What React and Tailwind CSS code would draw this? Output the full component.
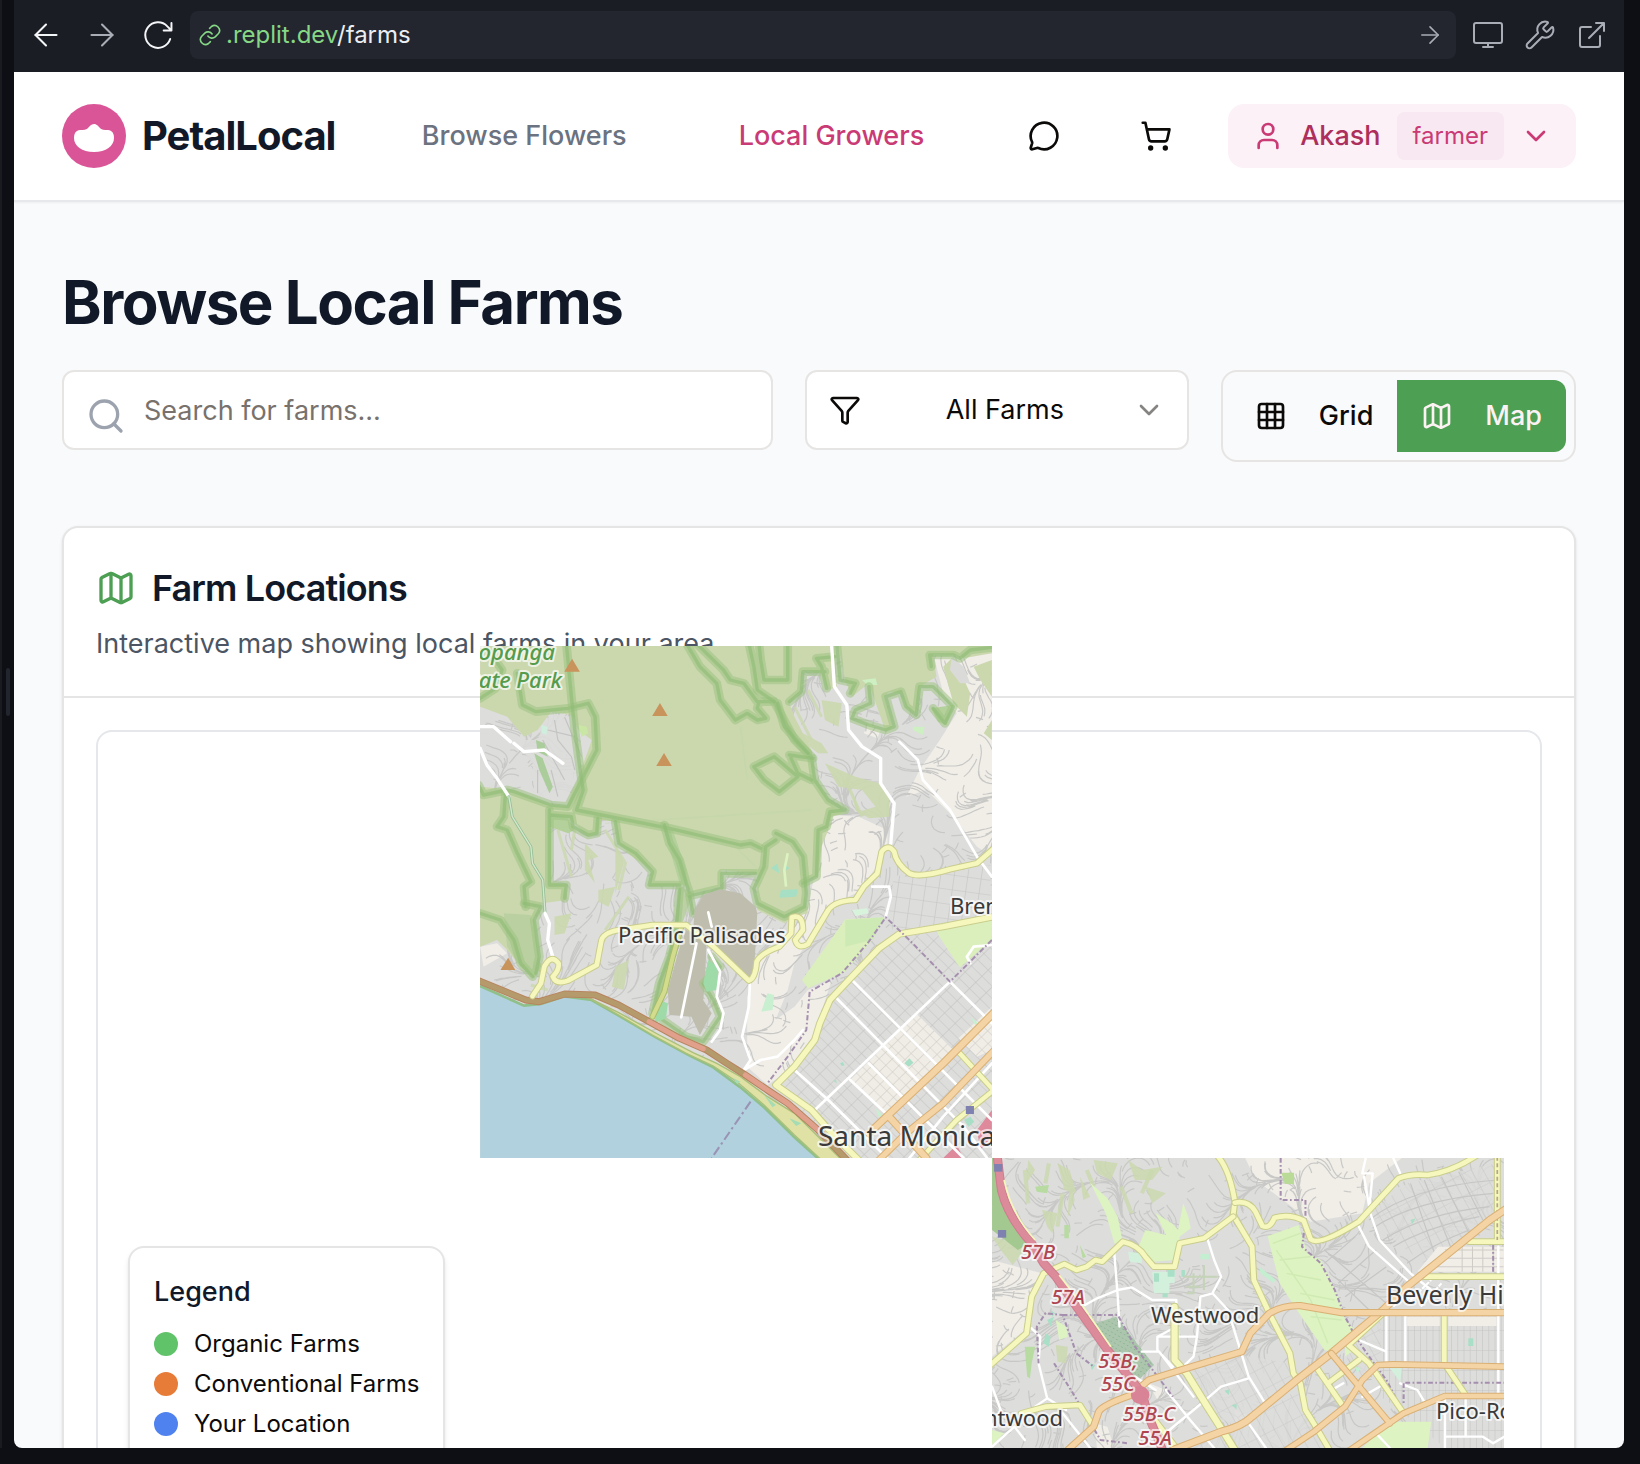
import React from "react";
import {
  ArrowLeft,
  ArrowRight,
  ChevronDown,
  Filter,
  Grid3x3,
  Map as MapIcon,
  MessageCircle,
  Search,
  ShoppingCart,
  User,
  Wrench,
} from "lucide-react";

/* ---------- street texture ---------- */

function makeRandom(seed) {
  let s = seed;
  return () => {
    s = (s * 16807) % 2147483647;
    return s / 2147483647;
  };
}

// Winding lanes that follow a smooth hillside field, with short cross links.
function lanes(seed, x0, y0, x1, y1, count) {
  const rnd = makeRandom(seed);
  const heading = (x, y) =>
    1.3 +
    1.5 * Math.sin(x / 83 + seed) +
    1.2 * Math.cos(y / 67) +
    0.8 * Math.sin((x + y) / 41);
  let d = "";
  for (let i = 0; i < count; i++) {
    let x = x0 + rnd() * (x1 - x0);
    let y = y0 + rnd() * (y1 - y0);
    const cross = rnd() < 0.25;
    const steps = cross ? 2 : 6 + Math.floor(rnd() * 6);
    d += `M${x.toFixed(0)} ${y.toFixed(0)}`;
    for (let k = 0; k < steps; k++) {
      const a = heading(x, y) + (cross ? Math.PI / 2 : 0);
      x += Math.cos(a) * 11;
      y += Math.sin(a) * 11;
      d += `L${x.toFixed(0)} ${y.toFixed(0)}`;
    }
  }
  return d;
}

const WEST_LANES = lanes(11, 30, 48, 1544, 1584, 1500);
const EAST_LANES = lanes(77, 35, 24, 1522, 894, 1000);

function Road({ d, w = 16, color = "#f5f7bd", casing = "#c9cd8c" }) {
  return (
    <g fill="none" strokeLinecap="round" strokeLinejoin="round">
      <path d={d} stroke={casing} strokeWidth={w + 6} />
      <path d={d} stroke={color} strokeWidth={w} />
    </g>
  );
}

function ParkEdge({ d }) {
  return (
    <g fill="none" strokeLinejoin="round" strokeLinecap="round">
      <path d={d} stroke="#9cc281" strokeOpacity="0.55" strokeWidth="26" />
      <path d={d} stroke="#8dbb75" strokeOpacity="0.6" strokeWidth="10" />
    </g>
  );
}

function Lines({ d, color = "#ffffff", w = 8, dash }) {
  return (
    <path
      d={d}
      fill="none"
      stroke={color}
      strokeWidth={w}
      strokeDasharray={dash}
      strokeLinejoin="round"
      strokeLinecap={dash ? "butt" : "round"}
    />
  );
}

function Label({ x, y, size = 22, anchor = "start", color = "#3a3a3a", italic, weight = 400, children }) {
  return (
    <text
      x={x}
      y={y}
      fontSize={size}
      textAnchor={anchor}
      fill={color}
      stroke="#ffffff"
      strokeOpacity="0.7"
      strokeWidth="4"
      strokeLinejoin="round"
      paintOrder="stroke"
      fontStyle={italic ? "italic" : "normal"}
      fontWeight={weight}
      fontFamily='"Noto Sans", sans-serif'
    >
      {children}
    </text>
  );
}

const ORANGE = { color: "#f4d3a4", casing: "#d9b074" };

function WestTile() {
  return (
    <svg viewBox="0 0 512 512" className="block size-full" role="img" aria-label="Map of Pacific Palisades and Santa Monica">
      <defs>
        <pattern id="city" width="44" height="26" patternUnits="userSpaceOnUse" patternTransform="rotate(45)">
          <rect width="44" height="26" fill="#dddddc" />
          <path d="M0 0H44M0 0V26" stroke="#c2c2c0" strokeWidth="3.5" />
        </pattern>
        <pattern id="cityLight" width="28" height="26" patternUnits="userSpaceOnUse" patternTransform="rotate(45)">
          <rect width="28" height="26" fill="#f0ede6" />
          <path d="M0 0H28M0 0V26" stroke="#cfccc6" strokeWidth="3.5" />
        </pattern>
        <pattern id="brentwood" width="40" height="44" patternUnits="userSpaceOnUse" patternTransform="rotate(8)">
          <rect width="40" height="44" fill="#dddddc" />
          <path d="M0 0H40M0 0V44" stroke="#c4c4c2" strokeWidth="3.5" />
        </pattern>
      </defs>
      <g transform="translate(-10 -16) scale(0.338 0.33333)">
        <rect x="0" y="0" width="1600" height="1600" fill="#dddddc" />
        <path fill="#f1eee8" d="M1370 70H1560V690L1500 650 1430 560 1350 480 1290 500 1330 420 1390 330 1440 250 1400 190ZM1070 555 1150 560 1235 600 1235 640 1210 700 1150 785 1080 820 1050 870 1000 930 960 1000 940 1080 900 1180 870 1230 820 1280 820 1100 860 980 930 930 1000 830 1010 780 1040 640ZM1000 1080 1070 1050 1010 1240 960 1310 880 1365 820 1310 860 1200 960 1130ZM1180 280 1215 300 1205 325 1165 310ZM30 950 80 940 110 970 40 1010Z" />
        <path d={WEST_LANES} fill="none" stroke="#c8c8c6" strokeWidth="3.5" strokeLinejoin="round" />
        <path fill="url(#brentwood)" d="M1255 735 1330 745 1540 705V860L1400 895 1250 900 1230 860 1245 800Z" />
        <path fill="#cbd8ae" opacity="0.9" d="M985 310 1040 340 1060 370 1030 370 980 330ZM1050 400 1140 440 1210 460 1240 500 1240 560 1180 565 1150 545 1200 530 1160 480 1090 470ZM380 780 430 770 410 830 380 815ZM250 860 300 850 280 910 250 915ZM430 1010 470 990 455 1080 420 1070ZM340 640 380 680 350 690 370 760 340 720ZM430 640 455 700 430 790ZM1040 210 1100 220 1090 290 1050 270ZM1130 480 1160 560 1140 540Z" />
        <g fill="none" stroke="#cbd8ae" strokeWidth="9" opacity="0.8">
          <path d="M960 230 1010 330M1000 180 1040 260M1110 450 1160 560M260 600 300 740M310 600 300 660M400 600 460 700 440 780M230 1080 180 1065M470 800 400 900" />
        </g>

        {/* parkland */}
        <path fill="#cbd8ae" d="M30 48H1080L1085 170 1060 180 1040 130 985 120 975 190 945 220 960 260 1010 360 1020 440 1060 510 1110 550 1070 560 1060 600 1040 650 1030 740 1000 745 990 800 1000 850 960 860 930 880 850 840 850 730 745 720 740 770 660 790 640 765 530 770 540 720 480 680 440 640 430 575 390 570 380 610 350 620 320 590 290 565 240 565V755L285 765V810L215 820 190 860 205 990 210 1010 190 1040 150 1010 110 960 80 930 30 950V470L130 480 240 525 285 530 320 440 350 360 360 330 320 300 300 255 240 245 200 300 160 320 110 260 30 230Z" />
        <path fill="#dddddc" d="M240 250 310 262 330 440 270 522 190 500 185 400 130 330 200 330 215 290Z" opacity="0.85" />
        <path d="M230 300 310 320M250 270 260 330 300 380 310 420M280 262 330 380M200 420V490M240 420 260 500M215 330 280 450" fill="none" stroke="#c4c4c2" strokeWidth="3.5" />
        <path fill="#9fc98c" opacity="0.8" d="M190 370 215 385 245 470 235 490 205 420ZM195 330 220 340 230 380 200 365Z" />
        <path fill="#c9e6a5" d="M320 285 345 290 350 310 330 320Z" />
        <path fill="#cfeedd" d="M212 285 230 290 226 315 212 310Z" />
        <path fill="#cbd8ae" d="M1090 48H1544V70L1460 85 1440 75 1370 72 1380 140 1330 170 1320 250 1290 230 1280 190 1240 185 1225 200 1250 290 1230 305 1180 160 1130 200 1110 150ZM1400 110 1430 80 1480 190 1470 260 1430 220ZM1490 110 1544 90V200L1510 150ZM1544 270V330L1520 310Z" />
        <path fill="#dadad8" d="M1425 80 1460 110 1480 160 1450 160 1420 120Z" />
        <path fill="#b5d19b" d="M1365 235 1430 225 1410 285 1385 275ZM570 590 600 600 640 720 640 770 620 760 600 690ZM235 550 290 565 310 600 290 610 235 590Z" />
        <path fill="#b9cfa0" opacity="0.9" d="M100 850 180 855 210 1010 190 1045 150 1010 110 950ZM620 770 660 790 600 960 575 1100 540 1160 560 1050 600 920Z" />
        <path fill="#cdefc2" d="M1310 290 1345 290 1340 315 1310 300ZM1160 150 1200 145 1205 165 1175 165Z" />
        <path fill="#a6dfc4" d="M890 715 910 700 915 730ZM920 780 970 778 965 800 915 803ZM930 700 945 715 925 725Z" />
        <path d="M940 670 930 720 935 770" fill="none" stroke="#dcf2c0" strokeWidth="8" />
        <path d="M790 655 850 715M400 580 1010 540M800 290 820 450" fill="none" stroke="#b8d8a0" strokeOpacity="0.3" strokeWidth="4" />

        <ParkEdge d="M30 205 75 175 95 120 60 70M140 130 155 225 195 245 290 235 350 220 370 260 375 360 330 450 290 530 240 525 130 485 110 480 40 495 25 465" />
        <ParkEdge d="M285 40 300 200 310 300 330 450 335 480 315 540 590 595 800 645 830 640 860 655" />
        <ParkEdge d="M640 40 680 110 730 160 740 210 785 270 820 250 850 270 875 265 850 235 855 215M670 40 750 120 770 150 810 160 850 215 900 215 940 290 960 330 1010 380 1020 450 1060 510 1110 540 1065 545 1055 590 1030 600 1025 740 985 760" />
        <ParkEdge d="M825 40 840 110 850 180 900 215M855 40 860 90 870 150H940V40M840 410 900 380 970 440 915 485 870 450ZM945 375 1015 385M950 385 970 430 1010 450M910 220 930 290 1000 370" />
        <ParkEdge d="M575 585 590 640 620 690 640 760 650 790M430 575 440 640 490 670 540 725 530 765 620 765M240 555 300 560 305 590 350 615 375 610 378 565M235 540V765H285L280 805" />
        <ParkEdge d="M105 490 100 560 80 590 110 600 140 670 180 755 160 770 165 830M905 610 955 635 985 680 995 790 990 830 930 860 850 820 840 775 870 710 875 650 905 630M845 730H745V775L660 795" />
        <ParkEdge d="M1085 40 1095 150 1140 160 1125 190M1180 170 1185 220 1140 240 1130 265 1180 285 1230 300 1255 290 1230 200 1275 185 1290 230 1320 255 1330 170 1370 170 1430 230 1405 280 1370 235M1080 80 1025 85 1040 110 1055 175M945 215 980 185 985 125 1050 125M1365 110 1360 75 1430 75 1450 85 1480 60 1544 52" />
        <ParkEdge d="M30 850 90 870 130 930 150 1000 185 1040M160 820 210 830 190 870 205 980 195 1030M620 780 610 900 590 980 560 1060 540 1150M650 800 660 850" />

        {/* bluffs */}
        <path fill="#bfbeae" d="M690 795 740 778 800 790 845 830 850 850 840 1035 820 1045 760 990 715 950 660 900 665 840ZM640 900 700 930 695 1060 690 1110 715 1150 680 1215 655 1160 590 1155 585 1080 615 970Z" />
        <ParkEdge d="M715 980 740 1010 690 1060 720 1110 740 1160 690 1235 640 1220 570 1170" />
        <path fill="#9edba8" d="M705 990 735 1010 730 1080 700 1085 690 1060ZM560 1110 585 1120 580 1165 545 1180Z" />
        <path fill="#c8efcf" d="M880 1090 900 1095 895 1140 862 1145Z" />

        {/* golf links */}
        <path fill="#dbefbd" d="M1110 868 1225 862 1190 930 1110 1025 1000 1075 982 1050 1060 940ZM1380 895 1544 858V930L1450 1012 1390 960Z" />
        <path fill="#c9e8b0" d="M1110 870 1225 862 1190 930 1110 950Z" opacity="0.7" />
        <path fill="#d8f3dc" d="M1130 840 1175 835 1180 850 1140 858Z" />

        {/* Santa Monica blocks */}
        <path fill="url(#city)" d="M1270 915 1370 890 1450 1015 1544 930V1600H1130L905 1365 1020 1230 1070 1095Z" />
        <path fill="url(#cityLight)" d="M1320 1150 1430 1260 1240 1460 1125 1350ZM1445 1225 1544 1130V1260L1500 1280Z" />
        <path fill="#a8dfc6" d="M1285 1300 1300 1285 1312 1298 1298 1310ZM1462 1470 1480 1460 1492 1475 1475 1490ZM1095 1300 1103 1296 1108 1306 1100 1308ZM1075 1352 1083 1350 1085 1360Z" />
        <path fill="#c6f0cf" d="M1480 1160 1504 1180 1495 1185ZM1200 1435 1220 1455 1210 1462Z" />
        <path fill="#de8a9c" d="M1500 1500 1544 1440V1520L1510 1560ZM1400 1584 1440 1545 1460 1584Z" />

        {/* ocean */}
        <path fill="#b1d1de" d="M30 1065 160 1125 210 1120 280 1097 360 1108 440 1155 550 1220 650 1275 720 1310 800 1370 870 1430 960 1520 1035 1590H30Z" />
        <path fill="none" stroke="#8fc08a" strokeWidth="8" d="M30 1068 160 1127 210 1122 280 1099 360 1110 440 1157 550 1222 650 1277 720 1312 800 1372 870 1432 960 1522 1035 1590" />
        <path fill="#dfe1a5" stroke="#a9c07a" strokeWidth="4" d="M350 1103 440 1148 560 1215 660 1268 730 1300 800 1340 880 1400 960 1450 1040 1530 1100 1590H1040L960 1515 870 1425 790 1355 720 1308 640 1270 540 1215 440 1155Z" />
        <path fill="#a5dcb4" d="M870 1395 905 1425 895 1432ZM945 1465 980 1480 965 1488ZM780 1345 800 1355 790 1362Z" />

        {/* secondary streets */}
        <Lines d="M1070 48 1078 170 1115 225 1120 300 1160 350 1215 385 1215 460 1255 520 1245 640" w={10} />
        <Lines d="M1270 335 1325 390 1340 450 1420 540 1500 680 1544 740" />
        <Lines d="M30 290H70L120 335M130 340 160 365 220 360 275 400" w={10} />
        <Lines d="M30 355 50 405 80 445 115 500" w={10} />
        <Lines d="M115 500 125 560 180 650 185 700 215 750 222 850" w={9} color="#95bf95" />
        <Lines d="M115 500 125 560 180 650 185 700 215 750 222 850" w={4} color="#d4e6cc" />
        <Lines d="M222 850 235 880 230 930 245 980" w={10} />
        <Lines d="M1190 770H1240L1245 800 1230 860M705 847 715 890M670 940 625 1162M705 960 740 1025 730 1100 750 1150 740 1200 715 1235M828 1060 825 1130 805 1220 830 1290 810 1320 860 1290 910 1280 960 1230 985 1200" />
        <Lines d="M1130 1050 1544 1470M1080 1100 1460 1490 1530 1584M960 1320 1060 1410 1240 1590M1420 1055 1010 1450M1420 1055 1544 1180M1544 1300 1400 1460 1300 1584M1180 1300 1460 1584M1125 1350 1230 1450M1470 980 1490 950 1544 945M1470 980 1480 1000" w={8} />

        {/* coast highway */}
        <Road d="M25 1052 165 1110 205 1115 280 1092 370 1095 440 1125 530 1175 620 1225 700 1260 760 1300 810 1332 880 1380 940 1420 1030 1500 1115 1590" w={15} color="#b59b6c" casing="#b8845f" />
        <Lines d="M530 1175 620 1225 690 1256M815 1335 880 1380 940 1420 1030 1500" w={15} color="#e1a08b" />

        {/* boulevards */}
        <Road d="M540 1160 575 1085 600 980 625 890" w={12} color="#d3dc8c" casing="#a9bd6c" />
        <Road d="M185 1098 210 1060 220 1010Q240 970 262 1000 265 1020 245 1040 255 1065 290 1052L375 1005 388 935Q392 908 440 900L540 885H640L720 950 825 1052Q845 1045 848 995 860 970 915 950L950 910 952 862Q985 850 985 900L962 930Q970 960 1000 942L1060 840Q1080 812 1140 810L1165 770 1205 730 1218 665Q1238 640 1255 665 1260 700 1300 730 1330 745 1420 718L1500 700 1550 655" w={14} />
        <Road d="M1550 860 1400 890 1270 912 1210 955 1130 1040 1065 1110 1035 1180 1020 1230 960 1310 905 1365 1010 1440 1080 1520 1150 1590" />
        <Road d="M1440 1260 1544 1375M1544 1385 1440 1470 1330 1590" w={13} />
        <Road d="M1240 1460 1350 1584M1550 1148 1400 1300 1180 1510" w={18} {...ORANGE} />
        <Road d="M1550 1262 1400 1420 1290 1510 1210 1590" {...ORANGE} />

        {/* city limits */}
        <Lines d="M1544 930 1420 1055 1300 930 1230 862 1180 935 1100 1030 1005 1085 995 1200 940 1280 880 1360" w={6} color="#a58fae" dash="16 7 5 7" />
        <Lines d="M830 1415 715 1584" w={6} color="#9a93b4" dash="28 10 7 10" />

        {/* peaks and stations */}
        <path fill="#c9935c" d="M302 86 325 125H279ZM562 219 585 258H539ZM574 369 597 408H551ZM113 983 134 1020H90Z" />
        <rect x="1467" y="1428" width="24" height="24" fill="#7f82b1" />
      </g>
      <Label x="75" y="14" anchor="end" color="#559b4c" italic weight={500}>Topanga</Label>
      <Label x="82" y="42" anchor="end" color="#559b4c" italic weight={500}>State Park</Label>
      <Label x="138" y="297">Pacific Palisades</Label>
      <Label x="470" y="268">Brentwood</Label>
      <Label x="338" y="500" size={28}>Santa Monica</Label>
    </svg>
  );
}

function EastTile() {
  return (
    <svg viewBox="0 0 512 512" className="block size-full" role="img" aria-label="Map of Westwood and Beverly Hills">
      <defs>
        <pattern id="flats" width="18" height="60" patternUnits="userSpaceOnUse">
          <rect width="18" height="60" fill="#dddddc" />
          <path d="M0 0H18M0 0V60" stroke="#c6c6c4" strokeWidth="3.5" />
        </pattern>
        <pattern id="slant" width="30" height="60" patternUnits="userSpaceOnUse" patternTransform="rotate(-28)">
          <rect width="30" height="60" fill="#dddddc" />
          <path d="M0 0H30M0 0V60" stroke="#c6c6c4" strokeWidth="3.5" />
        </pattern>
        <pattern id="graves" width="12" height="12" patternUnits="userSpaceOnUse" patternTransform="rotate(30)">
          <rect width="12" height="12" fill="#abc6ad" />
          <path d="M2 6H7" stroke="#8fb193" strokeWidth="2.5" />
        </pattern>
      </defs>
      <g transform="translate(-12 -8) scale(0.3444 0.33333)">
        <rect x="0" y="0" width="1600" height="1600" fill="#dddddc" />
        <path fill="#f1eee8" d="M770 24H1225L1130 100 1110 190 960 215 880 150 800 90ZM35 330 180 370 150 430 130 540 35 620ZM490 700 540 720 520 760ZM740 780 790 800 740 840ZM330 820 370 830 390 894H340Z" />
        <path d={EAST_LANES} fill="none" stroke="#c8c8c6" strokeWidth="3.5" strokeLinejoin="round" />
        <path fill="url(#slant)" d="M600 660 760 615 900 640 920 690 740 830 660 780ZM1240 100 1500 40V180L1300 350 1180 250 1130 190ZM1050 600 1160 500 1180 640 1110 680ZM590 894 740 845 920 720 960 800 1000 894Z" opacity="0.8" />
        <g fill="none" stroke="#c6c6c4" strokeWidth="3.5">
          <path d="M1130 210Q1250 110 1500 90M1140 235Q1260 150 1490 130M1170 270Q1290 190 1480 170M1200 290Q1300 230 1450 200M1240 340Q1320 280 1420 240M1250 100 1330 340M1290 90 1370 300M1340 80 1420 250M1390 65 1460 210M1000 300 1180 460M1030 380 1130 480M1000 340 1090 260M1040 400 1150 300M1060 440 1180 350" />
        </g>
        <path fill="url(#flats)" d="M1165 495H1522V894H1350L1230 790 1165 740Z" />
        <path fill="#f1eee8" d="M1330 290H1522V365H1270ZM1240 500H1335V528H1240ZM1360 500H1500V528H1360Z" />
        <path d="M1350 300H1520M1330 325H1520M1310 350H1520M1400 290V365M1430 290V365M1460 290V365M1490 290V365" fill="none" stroke="#cfccc6" strokeWidth="3" />

        {/* canyon greens */}
        <path fill="#cbd8ae" opacity="0.85" d="M140 30 160 60 135 100ZM225 40 260 60 280 130 245 120ZM180 180 225 190 210 250 195 230ZM330 30 400 40 380 90 340 70ZM430 30 470 60 530 50 500 90 450 90ZM260 90 275 150 255 200ZM35 260 100 280 150 270 95 345 60 300ZM220 585 255 590 250 640 225 635ZM480 110 540 130 500 160ZM290 80 320 140 300 150Z" />
        <path d="M130 60 140 160M200 40 190 100M240 130 225 230M310 60 330 110M410 110 440 190M500 60 470 130" fill="none" stroke="#cbd8ae" strokeWidth="12" opacity="0.8" />
        <path fill="#b7dba0" d="M160 110 200 105 195 130 165 125ZM245 225H258V265H245ZM290 285 308 320 298 325ZM130 590 160 590 150 640 145 685 137 680Z" />
        <path fill="#a3c990" d="M35 24H60L70 160 130 250 150 275 110 300 35 240Z" />
        <path fill="#ddf3c1" d="M320 98 370 145 400 200 415 280 390 280 365 190ZM510 190 560 222 575 240 590 160 605 200 612 235 580 260 570 330 500 335 460 292 480 240 540 255ZM835 258 925 225 950 310 990 330 1045 450 1060 510 1095 545 1020 605 1000 600 920 480 870 400ZM1190 815 1310 815 1300 894H1110ZM35 840 70 850 35 885ZM220 510 250 530 255 560 230 570ZM1060 585 1085 600 1060 620Z" />
        <path d="M850 280 930 250M870 330 960 320M890 370 990 390M930 430 1030 450M960 500 1050 510M860 300 960 450 1010 580" fill="none" stroke="#cfeab3" strokeWidth="4" />
        <path fill="#d3f0dd" d="M500 365H565V400H550V430H505ZM430 305 470 310 470 340 435 335ZM565 530H580V570H565ZM1190 655 1225 655 1220 695Z" />
        <path fill="#a8dfc6" d="M505 370H520V395H505ZM545 360H565V380H545ZM530 430H545V442H530ZM195 510 215 500 205 530ZM190 550 205 560 200 590 185 580ZM320 640 335 645 325 660ZM730 765 745 762V778ZM710 722 725 718 722 735ZM1418 565H1432V588H1418ZM205 480 218 490 210 500ZM585 360H595V380H585ZM1250 210 1265 205 1255 222Z" />
        <path fill="#c3efd0" d="M640 312H665V328H640ZM810 350 860 390 850 398 815 370ZM1090 650 1105 655 1095 672Z" />
        <path fill="#badb97" d="M875 68H912V102H885Z" />
        <path fill="url(#graves)" d="M335 520 395 500 505 645 460 690 410 640Z" />
        <path d="M590 380H690M600 410H640M650 345V420M600 430 620 430V370" fill="none" stroke="#c5d3b8" strokeWidth="6" />

        {/* local streets */}
        <Lines d="M390 310 400 440 405 530M305 465 340 445 400 420 440 412 500 450H570V530L515 560V600L560 650M660 265 680 330 700 380 675 430 720 480 750 580 780 680 825 755M640 440 630 560 620 620 590 650M675 430 640 440M520 560H630M470 605H520L620 740M150 535 175 560 170 640 195 745 160 770M195 745 250 780M240 790 320 894M550 840 620 780 700 710 780 685M540 720 610 810 680 894M450 680 510 720" w={7} />
        <Lines d="M1120 24 1110 70 1140 70 1130 180 1160 270 1250 370 1310 420M1095 220 1130 290 1240 390M1115 80 1130 170M1200 24 1220 70M1180 490V640M1235 490V640M1505 290V730M1100 570 1180 605M1350 740V894M1350 860H1410V750M1410 860 1460 860 1490 880 1522 860M1110 740 1160 710M1030 715 1055 700M1150 850 1190 894M780 820 830 894M35 710 60 780 35 830M100 830 35 890M100 830 130 870M1220 700 1270 720 1290 755" w={7} />
        <path d="M1250 450 1310 390M1280 470 1340 400M1200 470 1280 380" stroke="#ffffff" strokeWidth="6" strokeDasharray="12 4" />

        {/* city limits */}
        <Lines d="M873 24V150H945V215L935 290 990 340 1030 420 1060 500 1090 560 1130 620 1180 690 1230 790M1230 700V760M1235 698H1522M1490 285V380H1522M170 640 165 530 190 490 240 495 280 610 330 650M240 495 400 495 450 590 560 740M215 640 270 730 310 800 350 870 430 880" w={6} color="#a58fae" dash="14 7 5 7" />

        {/* boulevards */}
        <Road d="M690 18Q725 60 740 155L735 195 790 290 795 390 840 490 900 610 910 670 930 700 945 780 975 830 1015 900" w={14} />
        <Road d="M740 158Q780 150 800 185L820 228Q842 238 855 203 900 190 940 212L960 268Q985 290 1100 215L1215 85Q1250 70 1300 75 1370 65 1440 18" w={14} />
        <Road d="M30 645 135 550 150 440 185 370 245 342 280 360 310 350 335 330 355 335 415 275Q460 285 480 320L505 350H565L580 280 650 265 735 200" w={14} />
        <Road d="M565 470V630L600 670 660 770 740 900" w={18} />
        <Road d="M1502 20V270M1420 275H1530M1290 380H1530M1348 490V640L1410 735M1170 490 1070 585 1130 640 1230 790M975 650 1055 770M1010 700 1100 630M120 790 190 770 290 765 330 830M500 800 570 894" w={14} />
        <Lines d="M1502 20V270" w={5} color="#b9a58c" dash="12 8" />

        {/* arterials */}
        <Road d="M1530 175 1480 210 1240 410 1170 480 1020 610 920 690 790 800Q760 830 700 845L560 900" w={18} {...ORANGE} />
        <Road d="M255 900 330 830 345 785Q355 765 440 735L490 690 600 655 760 605 785 550 840 490Q880 465 930 467L1050 488H1530" w={16} {...ORANGE} />
        <Road d="M1530 650 1200 643 1155 645 1110 690 1060 770 970 845 890 900M1530 738H1350L1230 790 1075 900M1020 610 1190 820" w={14} {...ORANGE} />

        {/* freeway */}
        <Road d="M50 18 62 120Q80 200 150 280L185 340 220 380 280 470 370 600 440 690 470 730 490 800 530 900" w={20} color="#dc8b9b" casing="#cf7d8f" />
        <path d="M70 90Q90 190 160 270M230 375 300 470 380 590" fill="none" stroke="#f5f7bd" strokeWidth="5" />
        <circle cx="465" cy="735" r="27" fill="#d98496" />
        <rect x="41" y="42" width="24" height="23" fill="#7f82b1" />
        <rect x="52" y="240" width="24" height="23" fill="#7f82b1" />
      </g>
      <Label x="46" y="101" anchor="middle" size={20} color="#ae4550" italic weight={500}>57B</Label>
      <Label x="76" y="146" anchor="middle" size={20} color="#ae4550" italic weight={500}>57A</Label>
      <Label x="126" y="210" anchor="middle" size={20} color="#ae4550" italic weight={500}>55B;</Label>
      <Label x="126" y="233" anchor="middle" size={20} color="#ae4550" italic weight={500}>55C</Label>
      <Label x="157" y="263" anchor="middle" size={20} color="#ae4550" italic weight={500}>55B-C</Label>
      <Label x="163" y="287" anchor="middle" size={20} color="#ae4550" italic weight={500}>55A</Label>
      <Label x="159" y="165">Westwood</Label>
      <Label x="394" y="146" size={25}>Beverly Hills</Label>
      <Label x="444" y="261">Pico-Robertson</Label>
      <Label x="71" y="268" anchor="end">Brentwood</Label>
    </svg>
  );
}

/* ---------- page ---------- */

function BrowserBar() {
  return (
    <div className="flex h-[72px] shrink-0 items-center bg-[#1b1d25] pr-4 pb-0.5 text-[#a9adb6]">
      <button aria-label="Back" className="ml-4 flex size-8 items-center justify-center text-[#f4f5f7]">
        <ArrowLeft size={36} strokeWidth={1.4} className="shrink-0" />
      </button>
      <button aria-label="Forward" className="ml-6 flex size-8 items-center justify-center">
        <ArrowRight size={36} strokeWidth={1.4} className="shrink-0" />
      </button>
      <button aria-label="Reload" className="ml-6 flex size-8 items-center justify-center text-[#f4f5f7]">
        <svg width="34" height="34" viewBox="0 0 24 24" fill="none" stroke="currentColor" strokeWidth="1.4" strokeLinecap="round" strokeLinejoin="round" className="shrink-0">
          <path d="M20.6 14.8A9 9 0 1 1 18.6 5.9L21.3 8.6M21.5 3.6V8.9H16" />
        </svg>
      </button>
      <div className="ml-4 flex h-12 flex-1 items-center rounded-lg bg-[#23262f] pr-3 pl-2">
        <button aria-label="Address" className="flex items-center gap-1 text-2xl leading-8 text-[#eceef2]">
          <svg width="24" height="24" viewBox="0 0 24 24" fill="none" stroke="#86d786" strokeWidth="1.6" strokeLinecap="round" strokeLinejoin="round">
            <path d="M9.9 13.1a5 5 0 0 0 7.3.8l3.3-3.4a5 5 0 0 0-7-7l-1.9 1.8M14.1 10.9a5 5 0 0 0-7.3-.8l-3.3 3.4a5 5 0 0 0 7 7l1.9-1.8" />
          </svg>
          <span>
            <span className="text-[#86d786]">.replit.dev</span>/farms
          </span>
        </button>
        <button aria-label="Go" className="ml-auto">
          <ArrowRight size={28} strokeWidth={1.4} />
        </button>
      </div>
      <div className="ml-4 flex items-center gap-5">
        <button aria-label="Device preview">
          <svg width="32" height="32" viewBox="0 0 32 32" fill="none" stroke="currentColor" strokeWidth="2" strokeLinecap="round" strokeLinejoin="round">
            <rect x="2" y="4" width="28" height="20" rx="2" />
            <path d="M16 24V28M11 28H21" />
          </svg>
        </button>
        <button aria-label="Developer tools">
          <Wrench size={32} strokeWidth={1.5} />
        </button>
        <button aria-label="Open in new tab">
          <svg width="32" height="32" viewBox="0 0 32 32" fill="none" stroke="currentColor" strokeWidth="2" strokeLinecap="round" strokeLinejoin="round">
            <path d="M15 8H6a2 2 0 0 0-2 2V26a2 2 0 0 0 2 2H22a2 2 0 0 0 2-2V17M20 4H28V12M28 4 13 19" />
          </svg>
        </button>
      </div>
    </div>
  );
}

function SiteHeader() {
  return (
    <header className="flex h-[130px] shrink-0 items-center border-b-2 border-[#e7e8ec] bg-white px-12 shadow-xs">
      <a href="#home" className="flex items-center gap-4">
        <svg width="64" height="64" viewBox="0 0 64 64" aria-hidden="true">
          <circle cx="32" cy="32" r="32" fill="#da5597" />
          <path
            fill="#ffffff"
            d="M32 20C29 20 27.500 22.500 25.500 24.500 24 26 22 26 18 26 14 26.500 12 29 12 34 12 42 20 48 32 48S52 42 52 34C52 29 50 26.500 46 26 42 26 40 26 38.500 24.500 36.500 22.500 35 20 32 20Z"
          />
        </svg>
        <span className="text-[40px] leading-[48px] font-bold tracking-tight text-[#111827]">PetalLocal</span>
      </a>
      <nav className="ml-auto flex items-center text-[27px] leading-10 font-medium">
        <a href="#flowers" className="px-6 text-[#6b7280]">Browse Flowers</a>
        <a href="#growers" className="ml-16 px-6 text-[#ca3a75]">Local Growers</a>
        <button aria-label="Messages" className="ml-14 p-6 text-[#0c0a09]">
          <MessageCircle size={32} />
        </button>
        <button aria-label="Cart" className="ml-8 p-6 text-[#0c0a09]">
          <ShoppingCart size={32} />
        </button>
        <button className="ml-8 flex h-16 items-center gap-4 rounded-2xl bg-[#fbf1f7] px-6 text-[#ca3a75]">
          <User size={32} />
          <span className="text-[#ad2f5b]">Akash</span>
          <span className="flex h-12 items-center rounded-lg bg-[#f7e8f1] px-4 text-2xl font-normal">farmer</span>
          <ChevronDown size={32} />
        </button>
      </nav>
    </header>
  );
}

function Controls() {
  return (
    <div className="flex items-start gap-8 text-[27px]">
      <div className="relative flex-1">
        <Search size={40} className="absolute top-[26px] left-6 text-[#9ca3af]" />
        <input
          type="text"
          aria-label="Search for farms"
          placeholder="Search for farms..."
          className="h-20 w-full rounded-xl border-2 border-[#e7e5e4] bg-white pr-6 pl-20 outline-none placeholder:text-[#78716c]"
        />
      </div>
      <div className="relative w-96">
        <Filter size={32} className="pointer-events-none absolute top-6 left-6 text-[#0c0a09]" />
        <select
          aria-label="Farm type"
          className="h-20 w-full appearance-none rounded-xl border-2 border-[#e7e5e4] bg-white pr-12 pl-16 text-center text-[#0c0a09] [text-align-last:center]"
        >
          <option>All Farms</option>
        </select>
        <ChevronDown size={32} className="pointer-events-none absolute top-6 right-6 text-[#858483]" />
      </div>
      <div className="flex rounded-2xl border-2 border-[#e7e5e4] p-2 leading-10 font-medium">
        <button className="flex h-[72px] items-center gap-8 px-6 text-[#0c0a09]">
          <Grid3x3 size={32} />
          Grid
        </button>
        <button aria-pressed="true" className="flex h-[72px] items-center gap-8 rounded-r-xl bg-[#4d9f53] px-6 text-[#fdf2f3]">
          <MapIcon size={32} />
          Map
        </button>
      </div>
    </div>
  );
}

const LEGEND = [
  { label: "Organic Farms", dot: "bg-[#60c269]" },
  { label: "Conventional Farms", dot: "bg-[#e67c38]" },
  { label: "Your Location", dot: "bg-[#4f82ee]" },
];

function FarmMap() {
  return (
    <div className="relative h-[1000px] rounded-2xl border-2 border-[#e5e7eb] bg-white">
      <div className="absolute top-[-86px] left-[382px] size-[512px]">
        <WestTile />
      </div>
      <div className="absolute top-[426px] left-[894px] size-[512px]">
        <EastTile />
      </div>
      <div className="absolute top-[514px] left-[30px] rounded-2xl border-2 border-[#e5e5e5] bg-white p-6 shadow-md">
        <h3 className="text-[27px] leading-10 font-medium text-[#111827]">Legend</h3>
        <ul className="mt-4 flex flex-col gap-2">
          {LEGEND.map((item) => (
            <li key={item.label} className="flex items-center gap-4 text-2xl leading-8 text-[#0c0a09]">
              <span className={"size-6 rounded-full " + item.dot} />
              {item.label}
            </li>
          ))}
        </ul>
      </div>
    </div>
  );
}

export default function App() {
  return (
    <div className="flex h-screen overflow-hidden bg-[#0e0f14] pr-4 pb-4 font-['Inter',sans-serif]">
      <div className="w-[14px] shrink-0 border-l-2 border-[#191b20] pt-[668px] pl-1">
        <div className="h-12 w-1 rounded-full bg-[#23252e]" />
      </div>
      <div className="flex min-w-0 flex-1 flex-col overflow-hidden rounded-b-lg bg-[#f9fafb]">
        <BrowserBar />
        <SiteHeader />
        <main className="min-h-0 flex-1 overflow-hidden px-12 pt-16">
          <h1 className="mb-8 text-6xl leading-[72px] font-bold tracking-tight text-[#111827]">Browse Local Farms</h1>
          <Controls />
          <section className="mt-16 rounded-2xl border-2 border-[#e5e5e5] bg-white shadow-sm">
            <div className="border-b-2 border-[#e5e5e5] px-8 pt-10 pb-8">
              <h2 className="flex items-center gap-4 text-4xl leading-10 font-semibold tracking-tight text-[#111827]">
                <MapIcon size={40} className="text-[#4d9f53]" />
                Farm Locations
              </h2>
              <p className="mt-4 text-[27px] leading-10 text-[#4b5563]">Interactive map showing local farms in your area</p>
            </div>
            <div className="p-8">
              <FarmMap />
            </div>
          </section>
        </main>
      </div>
    </div>
  );
}
